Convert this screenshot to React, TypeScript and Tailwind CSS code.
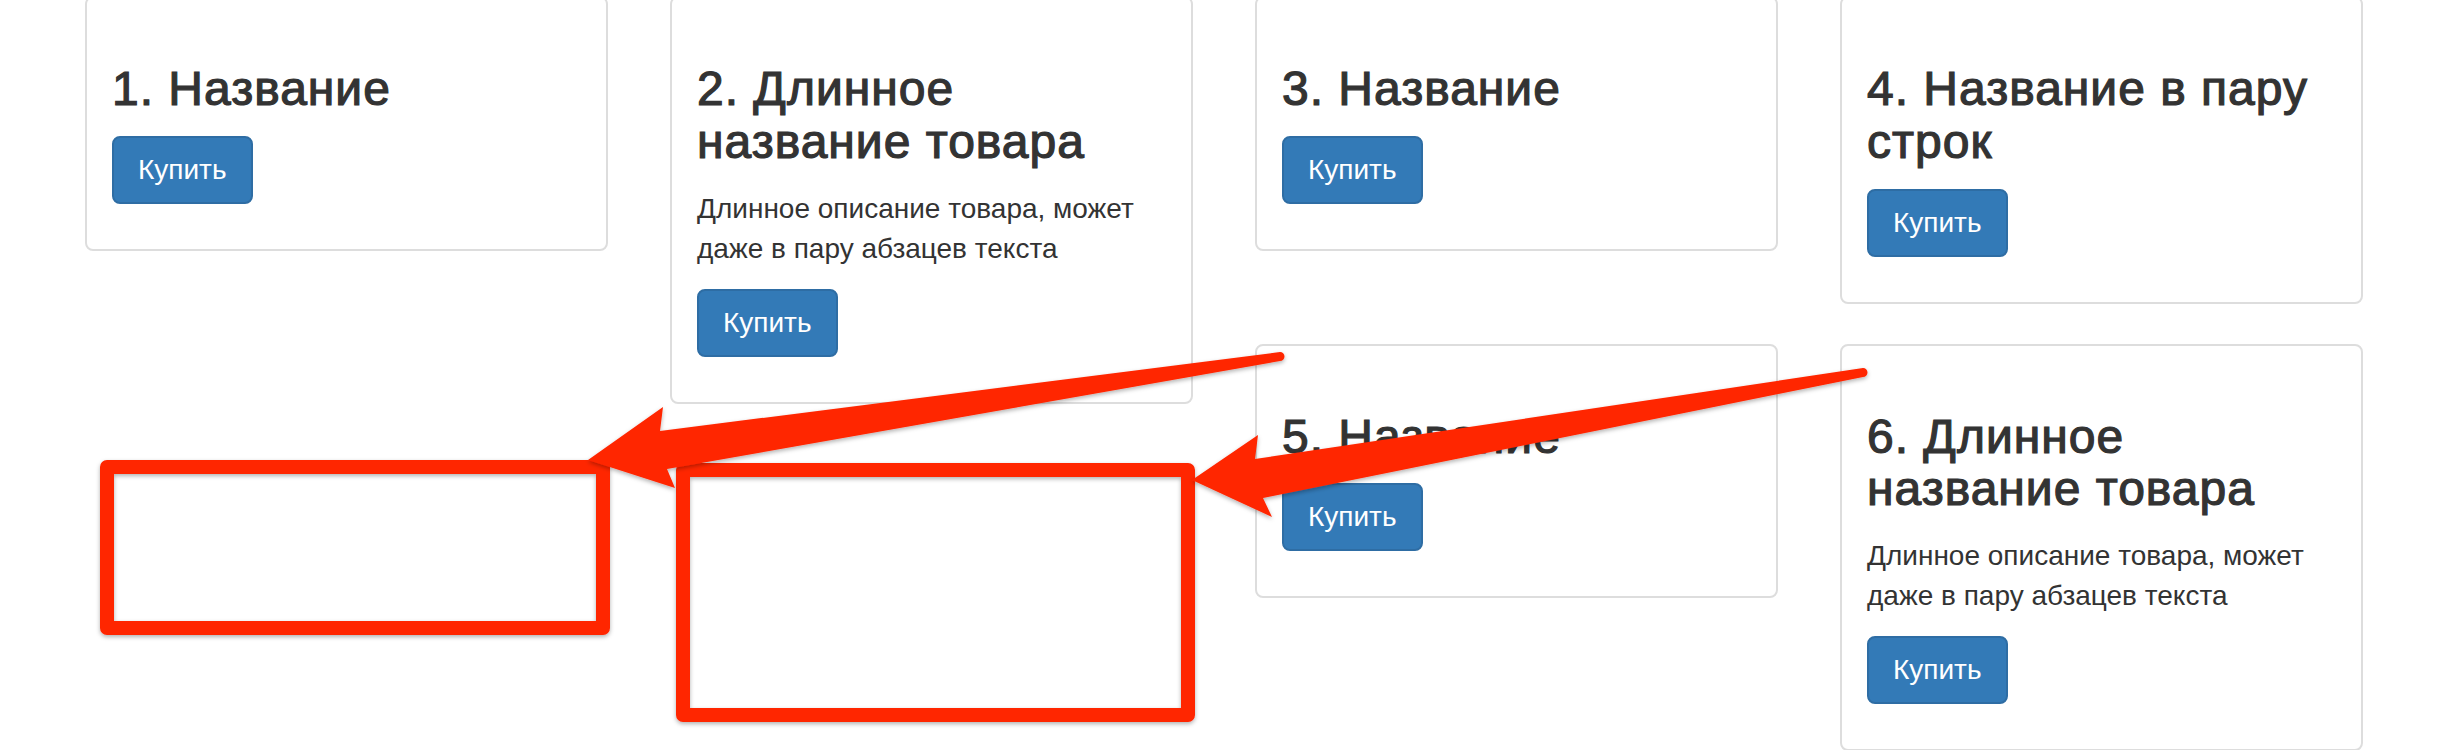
import React from "react";

type Item = {
  id: number;
  title: string;
  description?: string;
};

const items: Item[] = [
  { id: 1, title: "1. Название" },
  { id: 2, title: "2. Длинное название товара", description: "Длинное описание товара, может даже в пару абзацев текста" },
  { id: 3, title: "3. Название" },
  { id: 4, title: "4. Название в пару строк" },
  { id: 5, title: "5. Название" },
  { id: 6, title: "6. Длинное название товара", description: "Длинное описание товара, может даже в пару абзацев текста" },
];

function ProductCard({ item }: { item: Item }) {
  return (
    <div className="w-[523px] shrink-0 rounded-[8px] border-2 border-[#dddddd] bg-white px-[25px] pt-[25px] pb-[25px]">
      <h3 className="mt-[40px] mb-[20px] text-[48px] leading-[1.1] font-medium tracking-[1px] text-[#333333] [-webkit-text-stroke:1.2px_#333333]">
        {item.title}
      </h3>
      {item.description && (
        <p className="mb-[20px] text-[28px] leading-[40px] text-[#333333]">{item.description}</p>
      )}
      <p className="mb-[20px]">
        <button className="rounded-[8px] border-2 border-[#2e6da4] bg-[#337ab7] px-[24px] py-[12px] text-[28px] leading-[40px] text-white">
          Купить
        </button>
      </p>
    </div>
  );
}

// red markup drawn over the screenshot
function Annotations() {
  return (
    <svg className="pointer-events-none absolute inset-0" width="2444" height="750" viewBox="0 0 2444 750">
      <defs>
        <filter id="shadow" x="-10%" y="-10%" width="120%" height="130%">
          <feDropShadow dx="0" dy="2" stdDeviation="2" floodColor="#000" floodOpacity="0.3" />
        </filter>
      </defs>
      <g fill="none" stroke="#ff2600" strokeWidth="14" strokeLinejoin="round" filter="url(#shadow)">
        <rect x="107" y="467" width="496" height="161" />
        <rect x="683" y="470" width="505" height="245" />
      </g>
      <g fill="#ff2600" filter="url(#shadow)">
        <path d="M588 460 L663 407 L660 431 L1280 352 A4.5 4.5 0 0 1 1280 361 L667 469 L675 488 Z" />
        <path d="M1192 480 L1258 435 L1255 459 L1863 368 A4.5 4.5 0 0 1 1863 377 L1263 498 L1272 517 Z" />
      </g>
    </svg>
  );
}

export default function App() {
  const byId = (id: number) => items.find(i => i.id === id)!;

  return (
    <div className="relative h-[750px] w-full overflow-hidden bg-white font-['Liberation_Sans',Arial,sans-serif]">
      <div className="-mt-[4px] flex items-start gap-x-[62px] pl-[85px]">
        <ProductCard item={byId(1)} />
        <ProductCard item={byId(2)} />
        <div className="flex flex-col gap-y-[40px]">
          <div className="flex items-start gap-x-[62px]">
            <ProductCard item={byId(3)} />
            <ProductCard item={byId(4)} />
          </div>
          <div className="flex items-start gap-x-[62px]">
            <ProductCard item={byId(5)} />
            <ProductCard item={byId(6)} />
          </div>
        </div>
      </div>
      <Annotations />
    </div>
  );
}
